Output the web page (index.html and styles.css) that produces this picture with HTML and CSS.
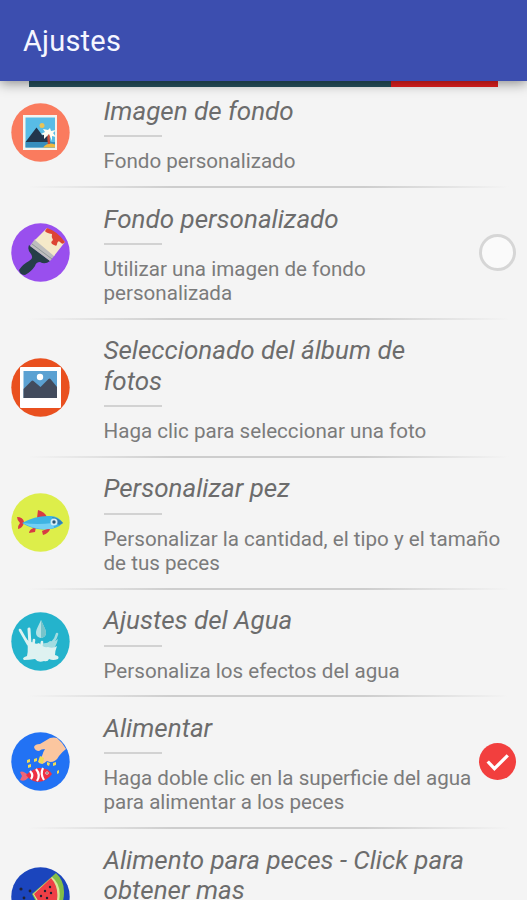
FILE: index.html
```html
<!DOCTYPE html>
<html lang="es">
<head>
<meta charset="utf-8">
<title>Ajustes</title>
<link rel="stylesheet" href="styles.css">
</head>
<body>
<header class="bar"><h1>Ajustes</h1></header>
<div class="banner"><span class="banner-main"></span><span class="banner-end"></span></div>
<main class="list">
  <section class="row">
    <svg class="icon" viewBox="0 0 59 59"><circle cx="29.5" cy="29.5" r="29.2" fill="#fa7b5e"/><path fill="#f4f3ee" d="M12 12h34v35H12z"/><path fill="#58bce6" d="M14.500 14.500h29.500v30H14.500z"/><circle cx="31" cy="22.500" r="2.500" fill="#e8c456"/><path fill="#22364c" d="M14.500 39 25.500 24.500l6 8 3-3 5 9.500z"/><path fill="#378ebd" d="M14.500 39H44v5.500H14.500z"/><path fill="#efb83e" d="M32 44.500q5-6 12-3v3z"/><path d="M38 41q-1-6 0-11" stroke="#ce4c37" stroke-width="2.400" fill="none"/><path fill="#fffdf2" d="m38 31-5 5v-4l-3-1 4-2-2-3 5 1 2-2 1 3 5-1-3 3 3 4-4-1v5z"/></svg>
    <div class="copy"><h2>Imagen de fondo</h2><hr><p>Fondo personalizado</p></div>
  </section>
  <section class="row with-check">
    <svg class="icon" viewBox="0 0 59 59"><circle cx="29.5" cy="29.5" r="29.2" fill="#994fee"/><path fill="#263e48" d="m18 22 21 16q-5 4-10 1-4 0-5 4-4 6-10 9-5 0-6-5 4-6 10-9 5-2 2-7-4-4-2-9z"/><path fill="#bdbdbd" d="m24 16 20 16-5 6-20-15z"/><path fill="#f5e9c9" d="M36 5q9 5 18 14L43 33 24 17z"/><path stroke="#8f969a" fill="none" d="m21 21 20 15"/><path fill="#dd4434" d="M36 5q10 3 18 14-2 3-4 1-3-4-4 1 0 3-3 1-5-2-1-5-2-3-1-6-6-1-7-3z"/></svg>
    <div class="copy"><h2>Fondo personalizado</h2><hr><p>Utilizar una imagen de fondo personalizada</p></div>
    <span class="check"></span>
  </section>
  <section class="row">
    <svg class="icon" viewBox="0 0 59 59"><circle cx="29.5" cy="29.5" r="29.2" fill="#e9501f"/><rect x="9" y="9" width="41" height="41" rx="1" fill="#fff"/><path fill="#5ba1d2" d="M12.500 13H46v27H12.500z"/><circle cx="29" cy="19" r="3.200" fill="#fff"/><path fill="#424b5d" d="m12.500 31 8-8q1-1 2 0l7 6 8-8q1-1 2 0l6.500 8v11H12.500z"/></svg>
    <div class="copy"><h2>Seleccionado del álbum de fotos</h2><hr><p>Haga clic para seleccionar una foto</p></div>
  </section>
  <section class="row">
    <svg class="icon" viewBox="0 0 59 59"><circle cx="29.5" cy="29.5" r="29.2" fill="#ddee4a"/><path fill="#d83b43" d="m26 25 1-8q7 2 9 7zM18 40q0-4 7-6l-1 5zm13-2q6-3 8-2-1 4-7 6zM6 24q6 0 7 5-1 6-6 7 0-4 2-6-3-3-3-6z"/><path fill="#3eb4e3" d="M11 30q14-8 29-7 7 0 12 7-6 6-15 6-13 2-26-6z"/><path fill="#73d0f4" d="M12 30q14 2 30 0l1 5q-15 4-31-5z"/><path fill="#3380b3" d="M41 24q7 1 11 6l-4 2-4-3z"/><circle cx="43" cy="29" r="3.500" fill="#d7edf4"/><circle cx="43" cy="29" r="1.700" fill="#275577"/></svg>
    <div class="copy"><h2>Personalizar pez</h2><hr><p>Personalizar la cantidad, el tipo y el tamaño de tus peces</p></div>
  </section>
  <section class="row">
    <svg class="icon" viewBox="0 0 59 59"><circle cx="29.5" cy="29.5" r="29.2" fill="#24b3cc"/><path fill="#b3e2e6" d="M30 8c2 5 5 9 5 13a5 5 0 0 1-10 0c0-4 3-8 5-13z"/><path fill="#76c4cb" d="M30 8c2 5 5 9 5 13q0 4-5 5z"/><path fill="#a2dce1" d="M31 31q5 1 8-2 5 1 8-2-2 9-7 12l-9-2z"/><g fill="none" stroke="#def2f1" stroke-linecap="round" stroke-width="2.600"><path d="m9 18 8 14"/><path d="m18 17 1 16" stroke-width="3"/><path d="m23 28-1 7M31 30l-1 5"/><path d="M46 22q-1 5-5 9" stroke="#a2dce1"/></g><path fill="#def2f1" d="M15 26q3 5 6 4 4 3 7 1 4 5 9 4 5 2 9-1-2 5-2 9 5 1 3 4-5 2-9 0-1 3-5 2-6 2-9-2-6 1-11 1-3-2 3-4 2-9-1-18z"/></svg>
    <div class="copy"><h2>Ajustes del Agua</h2><hr><p>Personaliza los efectos del agua</p></div>
  </section>
  <section class="row with-check">
    <svg class="icon" viewBox="0 0 59 59"><circle cx="29.500" cy="29.500" r="29.200" fill="#2272f4"/><path fill="#fbc69f" d="M39 6q4-1 7 0 6 5 9 11-4 3-7 7-3 6-9 6l-3-1q-4 4-8 2-1-3 3-7 1-4 3-7-4 0-6 2-4 0-5-4 1-3 6-3 5-3 10-6z"/><path fill="#f0db55" d="m29 24 4 2-1 6-5-2zM16 28l3-1v3l-3 1zm7-1 3-1v3l-3 1zm-6 6 3-1v3l-3 1zm19-3 3 1-1 3-2-1zm6 1 3-1v3l-3 1zm4 8 2-1v3l-2 1z"/><path fill="#ee6678" d="M17 43q-5-5-8-3l2 4-2 4q5 2 8-2z"/><path fill="#ed3143" d="M15 43q5-5 12-7 10-1 14 6-5 7-14 8-8-1-12-7z"/><path d="M19 39q4 4 1 8m5-10q5 6 1 12m6-13q-3 6 1 12" fill="none" stroke="#fff" stroke-width="2.200"/><circle cx="36" cy="41" r="1.600" fill="#fff"/><circle cx="36" cy="41" r=".8" fill="#222"/></svg>
    <div class="copy"><h2>Alimentar</h2><hr><p>Haga doble clic en la superficie del agua para alimentar a los peces</p></div>
    <span class="check checked"><svg viewBox="0 0 36 36"><path d="m8.500 18 6.500 7 13-13"/></svg></span>
  </section>
  <section class="row">
    <svg class="icon" viewBox="0 0 59 59"><circle cx="29.5" cy="29.5" r="29.2" fill="#1b45bd"/><path fill="#83bd49" d="M45 6q11 10 7 28-5 14-18 17L21 27z"/><path fill="#d9e59b" d="M41 10q10 8 7 24-4 12-14 14L22 27z"/><path fill="#ef3f46" d="M40 11q8 9 6 22-3 10-12 12L23 27z"/><g fill="#202235"><circle cx="10" cy="22" r="1.600"/><circle cx="19" cy="24" r="1.400"/><circle cx="13" cy="31" r="1.400"/><circle cx="39" cy="20" r="1.200"/><circle cx="34" cy="24" r="1.200"/><circle cx="40" cy="26" r="1.200"/><circle cx="30" cy="29" r="1.200"/><circle cx="36" cy="31" r="1.200"/></g></svg>
    <div class="copy tall"><h2>Alimento para peces - Click para obtener mas</h2></div>
  </section>
</main>
</body>
</html>
```
FILE: styles.css
```css
* { box-sizing: border-box; }
html, body { height: 900px; overflow: hidden; }
body { margin: 0; background: #f4f4f4; font-family: Roboto, sans-serif; color: #7b7b7b; }
.bar { position: relative; z-index: 2; height: 81px; padding: 23px 23px 0; background: #3c4eaf; box-shadow: 0 2px 12px rgba(0,0,0,.45); }
.bar h1 { margin: 0; font-size: 29px; line-height: 37px; font-weight: 400; color: #f5f6ff; letter-spacing: .2px; }
.banner { display: flex; height: 6px; margin: 0 29px; }
.banner-main { width: 362px; background: #26505d; }
.banner-end { flex: 1; background: #e62020; }
.list { margin-top: -7.700px; }
.row { display: flex; align-items: center; padding: 16.500px 11px 13.600px; position: relative; }
.row::after { content: ""; position: absolute; left: 28px; right: 18px; bottom: -1px; height: 2px; background: linear-gradient(90deg, transparent, #cdcdcd 30%, #cdcdcd 70%, transparent); }
.icon { width: 59px; height: 59px; flex: none; margin: -4px 34px 0 -.500px; }
.copy { width: 400px; flex: none; }
.tall { min-height: 108.200px; }
h2 { margin: 0; max-width: 363px; font-size: 26px; line-height: 30.600px; font-style: italic; font-weight: 400; color: #6c6c6c; }
hr { width: 58px; height: 2px; margin: 9px 0 12px; border: 0; background: #d2d2d2; }
p { margin: 0; font-size: 20.600px; line-height: 24px; }
.with-check p { max-width: 372px; }
.check { position: absolute; right: 11px; top: calc(50% - 19px); width: 37px; height: 37px; border: 3px solid #d6d6d6; border-radius: 50%; background: #fafafa; }
.checked { border: 0; background: #f23f3e; }
.check svg { display: block; width: 37px; height: 37px; fill: none; stroke: #fff; stroke-width: 3.200; }
```
